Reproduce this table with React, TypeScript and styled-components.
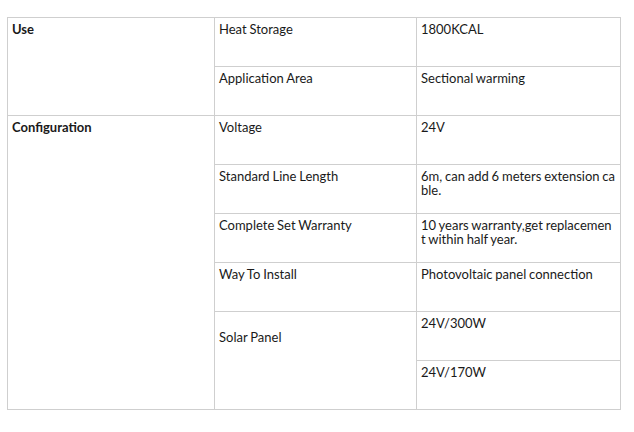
import * as React from "react";
import styled, {createGlobalStyle} from "styled-components";

const GlobalStyle = createGlobalStyle`
  html, body {
    margin: 0;
    padding: 0;
    background: #fff;
  }
  body {
    font-family: Lato, "Open Sans", sans-serif;
    color: #1a1a1a;
  }
`

const Page = styled.div`
  padding: 17px 0 0 7px;
  width: 634px;
  height: 432px;
  box-sizing: border-box;
`

const SpecTable = styled.table`
  border-collapse: collapse;
  table-layout: fixed;
  width: 613px;
  font-size: 13px;
  line-height: 1.1;
  word-spacing: -0.5px;
`

const Row = styled.tr`
  height: 49px;
`

const Cell = styled.td<{ $bold?: boolean; $offset?: number }>`
  border: 1px solid #cfcfcf;
  vertical-align: top;
  padding: ${p => 4 + (p.$offset ?? 0)}px 4.5px 4px 4px;
  font-weight: ${p => (p.$bold ? 700 : 400)};
  word-break: break-all;
  box-sizing: border-box;
`

type Spec = { label: string; value: string }

const config: Spec[] = [
    {label: "Voltage", value: "24V"},
    {label: "Standard Line Length", value: "6m, can add 6 meters extension cable."},
    {label: "Complete Set Warranty", value: "10 years warranty,get replacement within half year."},
    {label: "Way To Install", value: "Photovoltaic panel connection"},
]

export default function App() {
    return (
        <Page>
            <GlobalStyle/>
            <SpecTable>
                <colgroup>
                    <col style={{width: 207}}/>
                    <col style={{width: 202}}/>
                    <col style={{width: 204}}/>
                </colgroup>
                <tbody>
                <Row>
                    <Cell $bold rowSpan={2}>Use</Cell>
                    <Cell>Heat Storage</Cell>
                    <Cell>1800KCAL</Cell>
                </Row>
                <Row>
                    <Cell>Application Area</Cell>
                    <Cell>Sectional warming</Cell>
                </Row>
                {config.map((item, i) => (
                    <Row key={item.label}>
                        {i === 0 && <Cell $bold rowSpan={6}>Configuration</Cell>}
                        <Cell>{item.label}</Cell>
                        <Cell>{item.value}</Cell>
                    </Row>
                ))}
                <Row>
                    <Cell rowSpan={2} $offset={14}>Solar Panel</Cell>
                    <Cell>24V/300W</Cell>
                </Row>
                <Row>
                    <Cell>24V/170W</Cell>
                </Row>
                </tbody>
            </SpecTable>
        </Page>
    );
}
